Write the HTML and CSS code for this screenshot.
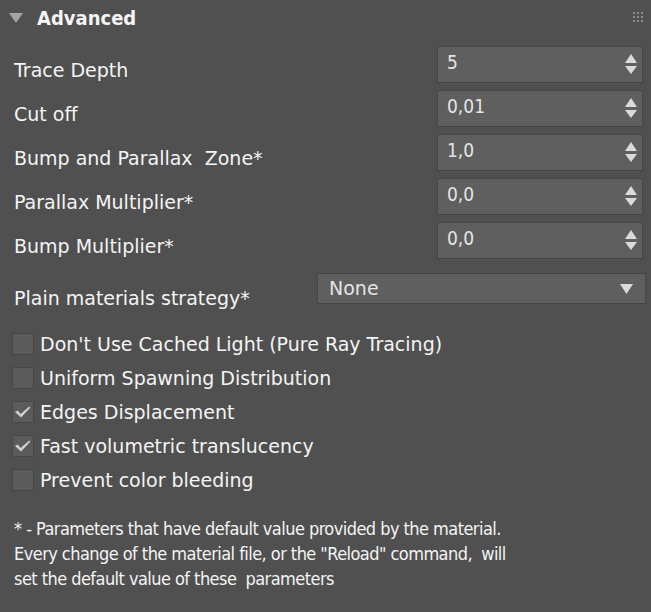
FILE: index.html
```html
<!DOCTYPE html>
<html>
<head>
<meta charset="utf-8">
<link rel="stylesheet" href="styles.css">
</head>
<body>
<div class="panel">
  <div class="header">
    <svg class="caret" width="14" height="11" viewBox="0 0 14 11"><polygon points="0,0 14,0 7,10" fill="#a3a3a3"/></svg>
    <span class="title">Advanced</span>
    <svg class="grip" width="11" height="11" viewBox="0 0 11 11" fill="#8c8c8c">
      <rect x="0" y="0" width="2" height="2"/><rect x="4" y="0" width="2" height="2"/><rect x="8" y="0" width="2" height="2"/>
      <rect x="0" y="4" width="2" height="2"/><rect x="4" y="4" width="2" height="2"/><rect x="8" y="4" width="2" height="2"/>
      <rect x="0" y="8" width="2" height="2"/><rect x="4" y="8" width="2" height="2"/><rect x="8" y="8" width="2" height="2"/>
    </svg>
  </div>

  <div class="fields">
    <div class="row"><span class="label">Trace Depth</span><div class="spinner"><span class="value">5</span><svg class="arrows" width="12" height="21" viewBox="0 0 12 21"><polygon points="6,0 12,9 0,9" fill="#dadada"/><polygon points="0,12 12,12 6,20" fill="#dadada"/></svg></div></div>
    <div class="row"><span class="label">Cut off</span><div class="spinner"><span class="value">0,01</span><svg class="arrows" width="12" height="21" viewBox="0 0 12 21"><polygon points="6,0 12,9 0,9" fill="#dadada"/><polygon points="0,12 12,12 6,20" fill="#dadada"/></svg></div></div>
    <div class="row"><span class="label">Bump and Parallax&nbsp; Zone*</span><div class="spinner"><span class="value">1,0</span><svg class="arrows" width="12" height="21" viewBox="0 0 12 21"><polygon points="6,0 12,9 0,9" fill="#dadada"/><polygon points="0,12 12,12 6,20" fill="#dadada"/></svg></div></div>
    <div class="row"><span class="label">Parallax Multiplier*</span><div class="spinner"><span class="value">0,0</span><svg class="arrows" width="12" height="21" viewBox="0 0 12 21"><polygon points="6,0 12,9 0,9" fill="#dadada"/><polygon points="0,12 12,12 6,20" fill="#dadada"/></svg></div></div>
    <div class="row"><span class="label">Bump Multiplier*</span><div class="spinner"><span class="value">0,0</span><svg class="arrows" width="12" height="21" viewBox="0 0 12 21"><polygon points="6,0 12,9 0,9" fill="#dadada"/><polygon points="0,12 12,12 6,20" fill="#dadada"/></svg></div></div>
  </div>

  <div class="row select-row">
    <span class="label">Plain materials strategy*</span>
    <div class="select"><span class="value">None</span><svg class="drop" width="13" height="10" viewBox="0 0 13 10"><polygon points="0,0 13,0 6.5,10" fill="#dadada"/></svg></div>
  </div>

  <div class="checks">
    <label class="check"><span class="box"></span><span>Don't Use Cached Light (Pure Ray Tracing)</span></label>
    <label class="check"><span class="box"></span><span>Uniform Spawning Distribution</span></label>
    <label class="check"><span class="box"><svg width="20" height="20" viewBox="0 0 20 20"><path d="M2 10 L4.8 8.4 L7.6 12 L16.2 4.6 L17.2 5.8 L8 15.4 Z" fill="#d2d2d2"/></svg></span><span>Edges Displacement</span></label>
    <label class="check"><span class="box"><svg width="20" height="20" viewBox="0 0 20 20"><path d="M2 10 L4.8 8.4 L7.6 12 L16.2 4.6 L17.2 5.8 L8 15.4 Z" fill="#d2d2d2"/></svg></span><span>Fast volumetric translucency</span></label>
    <label class="check"><span class="box"></span><span>Prevent color bleeding</span></label>
  </div>

  <p class="note">* - Parameters that have default value provided by the material.<br>Every change of the material file, or the "Reload" command,&nbsp; will<br>set the default value of these&nbsp; parameters</p>
</div>
</body>
</html>
```

FILE: styles.css
```css
html, body {
  margin: 0;
  padding: 0;
  background: #505050;
}
.panel {
  width: 651px;
  height: 612px;
  box-sizing: border-box;
  font-family: "DejaVu Sans", sans-serif;
  font-size: 19px;
  color: #f4f4f4;
  padding: 0 8px 0 14px;
}
.header {
  display: flex;
  align-items: center;
  height: 36px;
  margin-left: -5px;
}
.caret {
  margin-top: 1px;
}
.title {
  font-family: "DejaVu Sans Condensed", "DejaVu Sans", sans-serif;
  font-weight: bold;
  font-size: 20px;
  margin-left: 14px;
  flex: 1;
}
.grip {
  margin-right: -1px;
  margin-top: -2px;
}
.fields {
  display: flex;
  flex-direction: column;
  gap: 7px;
  margin-top: 10px;
}
.row {
  display: flex;
  justify-content: space-between;
  align-items: flex-end;
}
.label {
  line-height: 24px;
  padding-bottom: 1px;
}
.spinner {
  width: 206px;
  height: 37px;
  box-sizing: border-box;
  background: #5f5f5f;
  border: 1px solid #464646;
  display: flex;
  justify-content: space-between;
  align-items: center;
  padding: 0 5px 0 9px;
}
.value {
  font-family: "DejaVu Sans Condensed", "DejaVu Sans", sans-serif;
  color: #e4e4e4;
  align-self: flex-start;
  margin-top: 4px;
  line-height: 22px;
}
.select-row {
  margin-top: 14px;
  margin-right: -3px;
}
.select {
  width: 329px;
  height: 31px;
  box-sizing: border-box;
  background: #5f5f5f;
  border: 1px solid #464646;
  display: flex;
  justify-content: space-between;
  align-items: center;
  padding: 0 12px 0 11px;
}
.select .value {
  font-family: "DejaVu Sans", sans-serif;
  margin-top: 3px;
}
.select-row .label {
  padding-bottom: 0;
  margin-bottom: -6px;
}
.checks {
  display: flex;
  flex-direction: column;
  gap: 12px;
  margin-top: 29px;
  margin-left: -2px;
}
.check {
  display: flex;
  align-items: center;
  gap: 6px;
  height: 22px;
}
.box {
  width: 22px;
  height: 22px;
  box-sizing: border-box;
  background: #5b5b5b;
  border: 1px solid #474747;
  display: flex;
}
.note {
  font-family: "DejaVu Sans Condensed", "DejaVu Sans", sans-serif;
  font-size: 18px;
  letter-spacing: -0.55px;
  margin: 25px 0 0 0;
  line-height: 25px;
}
```
